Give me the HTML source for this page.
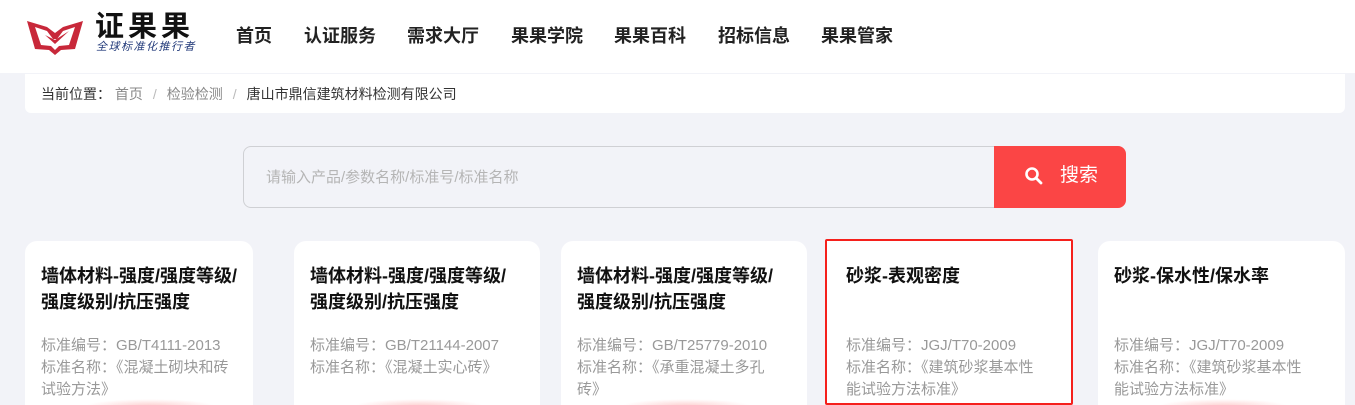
<!DOCTYPE html>
<html><head><meta charset="utf-8"><style>
*{margin:0;padding:0;box-sizing:border-box}
html,body{width:1355px;height:405px;overflow:hidden}
body{background:#f2f3f8;font-family:"Liberation Sans","Noto Sans CJK SC",sans-serif;position:relative}
.hdr{position:absolute;left:0;top:0;width:1355px;height:73px;background:#fff}
.nav{position:absolute;top:24px;font-size:18px;font-weight:bold;color:#222;white-space:nowrap;line-height:24px}
.bc{position:absolute;left:25px;top:74px;width:1320px;height:39px;background:#fff;border-radius:0 0 6px 6px;font-size:14px;color:#333;padding:10px 0 0 16px;white-space:nowrap;line-height:20px}
.bc span.g{color:#888}
.bc span.s{color:#bbb;margin:0 10px}
.inp{position:absolute;left:243px;top:146px;width:760px;height:62px;border:1px solid #cfd0d4;border-radius:8px 0 0 8px;background:#f2f3f8;font-size:15px;color:#b5b5b5;padding:20px 0 0 22px;line-height:22px}
.btn{position:absolute;left:994px;top:146px;width:132px;height:62px;background:#fb4545;border-radius:0 8px 8px 0;color:#fff;font-size:19px;padding:17px 0 0 66px;line-height:26px}
.card{position:absolute;top:241px;width:228px;height:164px;background:#fff;border-radius:12px 12px 0 0;padding:22px 0 0 16px;white-space:nowrap;overflow:hidden}
.card h3{font-size:18px;font-weight:bold;color:#111;line-height:26px;height:72px}
.card p{font-size:15px;color:#999;line-height:22px}
.fade{position:absolute;bottom:-8px;left:60px;width:130px;height:14px;background:radial-gradient(ellipse at center,rgba(251,69,69,.25),rgba(251,69,69,0) 70%)}
</style></head><body>
<div class="hdr">
<svg style="position:absolute;left:25px;top:17px" width="60" height="40" viewBox="0 0 60 40">
<path d="M2 4 L22 10 L30 16 L38 10 L58 4 L50 32 L36 33 L30 38 L24 33 L10 32 Z" fill="#c8283a"/>
<path d="M10 10 L22 14 L28 22 L32 22 L38 14 L50 10 L44 28 L34 29 L30 33 L26 29 L16 28 Z" fill="#fff"/>
<path d="M20 18 L30 27 L44 14 L30 23 Z" fill="#c8283a"/>
</svg>
<div style="position:absolute;left:95px;top:12px;font-size:29px;line-height:30px;font-weight:bold;color:#111;letter-spacing:4px">证果果</div>
<div style="position:absolute;left:96px;top:41px;font-size:11px;line-height:12px;color:#223a7a;font-style:italic;letter-spacing:1.5px">全球标准化推行者</div>
<div class="nav" style="left:236px">首页</div>
<div class="nav" style="left:304px">认证服务</div>
<div class="nav" style="left:407px">需求大厅</div>
<div class="nav" style="left:511px">果果学院</div>
<div class="nav" style="left:614px">果果百科</div>
<div class="nav" style="left:718px">招标信息</div>
<div class="nav" style="left:821px">果果管家</div>
</div>
<div class="bc">当前位置： <span class="g">首页</span><span class="s">/</span><span class="g">检验检测</span><span class="s">/</span>唐山市鼎信建筑材料检测有限公司</div>
<div class="inp">请输入产品/参数名称/标准号/标准名称</div>
<div class="btn">搜索</div>
<svg style="position:absolute;left:1024px;top:166px" width="20" height="20" viewBox="0 0 20 20"><circle cx="8" cy="8" r="5.5" fill="none" stroke="#fff" stroke-width="2.6"/><path d="M12 12 L17 17" stroke="#fff" stroke-width="2.8" stroke-linecap="round"/></svg>

<div class="card" style="left:25px"><h3>墙体材料-强度/强度等级/<br>强度级别/抗压强度</h3><p>标准编号：GB/T4111-2013<br>标准名称：《混凝土砌块和砖<br>试验方法》</p><div class="fade"></div></div>
<div class="card" style="left:294px;width:246px"><h3>墙体材料-强度/强度等级/<br>强度级别/抗压强度</h3><p>标准编号：GB/T21144-2007<br>标准名称：《混凝土实心砖》</p><div class="fade"></div></div>
<div class="card" style="left:561px;width:246px"><h3>墙体材料-强度/强度等级/<br>强度级别/抗压强度</h3><p>标准编号：GB/T25779-2010<br>标准名称：《承重混凝土多孔<br>砖》</p><div class="fade"></div></div>
<div class="card" style="left:825px;top:239px;width:248px;height:166px;border:2px solid #f5201c;border-radius:2px;padding:22px 0 0 19px"><h3>砂浆-表观密度</h3><p>标准编号：JGJ/T70-2009<br>标准名称：《建筑砂浆基本性<br>能试验方法标准》</p></div>
<div class="card" style="left:1098px;width:247px"><h3>砂浆-保水性/保水率</h3><p>标准编号：JGJ/T70-2009<br>标准名称：《建筑砂浆基本性<br>能试验方法标准》</p><div class="fade"></div></div>
</body></html>
